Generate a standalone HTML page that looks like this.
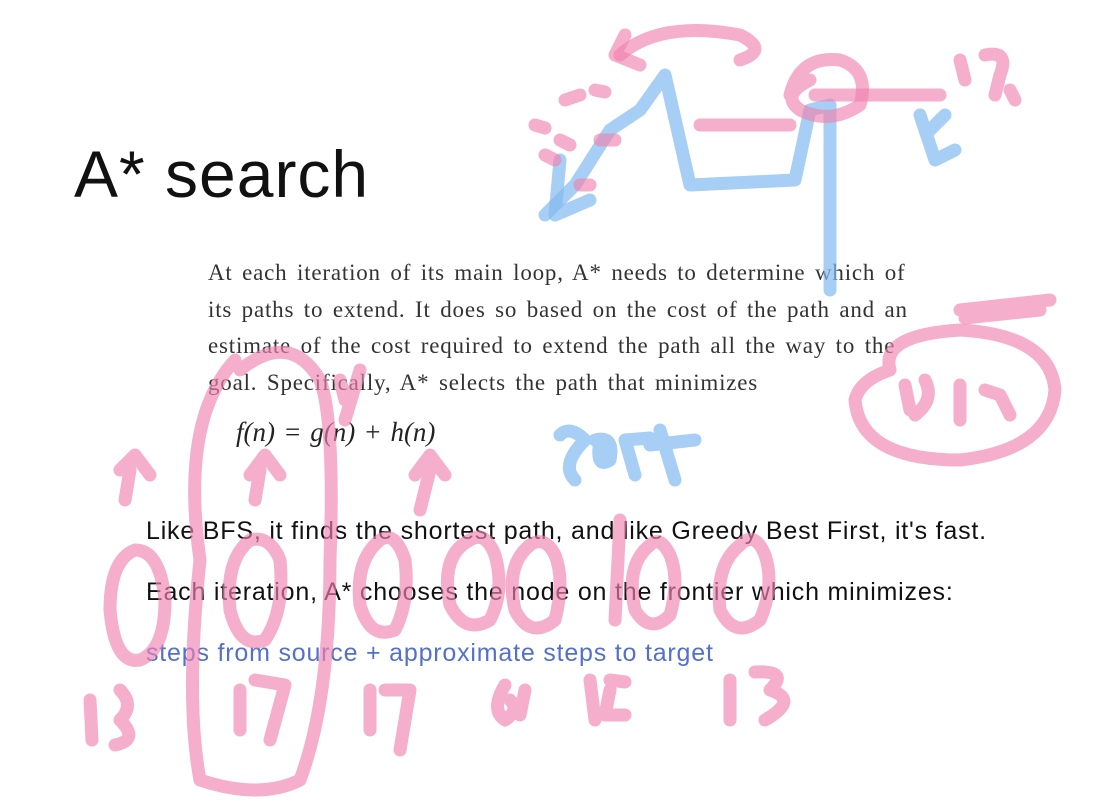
<!DOCTYPE html>
<html><head><meta charset="utf-8"><style>
body{margin:0;width:1094px;height:803px;background:#fff;overflow:hidden;position:relative;font-family:"Liberation Sans",sans-serif}
h1{position:absolute;left:74px;top:136px;margin:0;font-weight:300;font-size:66px;color:#111;font-family:"Liberation Sans",sans-serif;letter-spacing:1px}
.p{position:absolute;left:208px;top:255px;font-family:"Liberation Serif",serif;font-size:23px;line-height:36.5px;color:#333;width:760px;letter-spacing:0.8px;word-spacing:3px;white-space:nowrap}
.f{position:absolute;left:236px;top:417px;font-family:"Liberation Serif",serif;font-style:italic;font-size:27px;color:#222;white-space:nowrap}
.f b{font-weight:normal;font-style:normal;margin:0 10px}
.s{position:absolute;left:146px;font-size:25px;letter-spacing:0.8px;color:#111;white-space:nowrap}
svg{position:absolute;left:0;top:0}
</style></head><body>
<h1>A* search</h1>
<div class="p">At each iteration of its main loop, A* needs to determine which of<br>its paths to extend. It does so based on the cost of the path and an<br>estimate of the cost required to extend the path all the way to the<br>goal. Specifically, A* selects the path that minimizes</div>
<div class="f">f(n)<b>=</b>g(n)<b>+</b>h(n)</div>
<div class="s" style="top:517px">Like BFS, it finds the shortest path, and like Greedy Best First, it's fast.</div>
<div class="s" style="top:578px">Each iteration, A* chooses the node on the frontier which minimizes:</div>
<div class="s" style="top:639px;color:#5470c9">steps from source + approximate steps to target</div>
<svg width="1094" height="803" fill="none" stroke-linecap="round" stroke-linejoin="round">
<g stroke="rgba(130,185,240,0.7)" stroke-width="13">
<path d="M545 215 L575 185 L610 130 L640 110 L665 75 L690 185 L795 180 L810 110 L830 105 L830 290"/>
<path d="M560 160 L555 215 L590 200"/>
<path d="M920 115 L935 160 L955 150 M930 130 L945 115"/>
<path d="M560 435 Q570 425 585 440 Q560 465 575 480 M595 440 Q615 435 610 460 Q595 470 600 440 M625 440 L635 475 M625 440 L650 438 M660 430 L675 480 M650 445 L695 440"/>
</g>
<g stroke="rgba(240,130,175,0.65)" stroke-width="13">
<path d="M620 55 Q660 20 740 35 Q770 50 740 60"/>
<path d="M625 35 L615 55 L640 65"/>
<path d="M790 95 Q800 55 840 60 Q870 70 860 105 Q830 125 800 110 Q780 95 810 80"/>
<path d="M815 95 L940 95"/>
<path d="M960 60 L965 80 M985 55 Q1010 50 1000 75 L995 95 M1010 90 L1015 100"/>
<path d="M565 100 L580 95 M595 90 L605 92 M535 125 L545 128 M560 140 L570 145 M600 140 L615 140 M545 155 L555 160 M580 185 L590 185 M700 125 L790 125"/>
<path d="M890 370 Q880 335 960 330 Q1050 335 1055 390 Q1050 450 960 460 Q860 460 855 400 Q860 380 890 370"/>
<path d="M905 385 L910 410 M925 380 Q935 400 915 415 M960 385 L960 420 M985 390 L1000 395 L1010 415"/>
<path d="M960 310 L1050 300 M965 318 L1040 310"/>
<path d="M130 470 L125 500 M120 470 L135 455 L150 475"/>
<path d="M135 550 Q110 560 110 610 Q115 665 140 660 Q165 650 165 600 Q160 550 135 550"/>
<path d="M260 470 L255 500 M250 475 L265 455 L280 475"/>
<path d="M250 540 Q225 560 230 610 Q240 650 265 640 Q285 610 280 560 Q270 535 250 540"/>
<path d="M235 360 Q180 420 200 560 Q185 700 200 780 Q260 800 300 780 Q330 700 330 560 Q335 420 320 380 Q290 330 240 370"/>
<path d="M430 470 L420 510 M415 475 L430 455 L445 475"/>
<path d="M380 540 Q355 560 360 605 Q370 640 395 630 Q410 600 405 560 Q395 530 380 540"/>
<path d="M470 540 Q440 555 450 605 Q465 635 490 620 Q505 590 495 555 Q485 530 470 540"/>
<path d="M530 545 Q505 565 515 610 Q530 640 555 620 Q565 580 555 555 Q545 535 530 545"/>
<path d="M620 520 L615 620 M650 545 Q625 565 635 610 Q650 635 670 615 Q680 580 670 555 Q660 535 650 545"/>
<path d="M740 545 Q715 565 720 610 Q735 640 760 620 Q775 585 765 555 Q755 530 740 545"/>
<path d="M90 700 L92 740 M120 690 Q135 705 120 720 Q140 740 115 745"/>
<path d="M240 690 L240 730 M255 680 L285 685 L270 740"/>
<path d="M370 690 L370 730 M385 690 L410 690 L400 750"/>
<path d="M505 685 Q490 710 505 720 Q520 710 510 700 M525 690 L520 715"/>
<path d="M590 680 L595 720 M610 680 L625 682 M610 690 L605 715 L625 715"/>
<path d="M730 680 L730 720 M755 672 Q790 670 770 690 Q800 700 765 720"/>
<path d="M345 400 L340 380 M360 370 L345 420"/>
</g>
</svg>
</body></html>
